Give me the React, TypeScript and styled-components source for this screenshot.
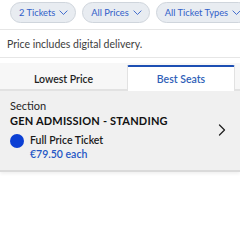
import React from 'react';
import styled, { createGlobalStyle } from 'styled-components';

const GlobalStyle = createGlobalStyle`
  html, body {
    margin: 0;
    padding: 0;
    background: #ffffff;
  }
  body {
    font-family: Lato, "Liberation Sans", sans-serif;
    -webkit-font-smoothing: antialiased;
  }
`;

const filters = ['2 Tickets', 'All Prices', 'All Ticket Types'];

const Chevron = ({ size = 9, color = '#3160c9' }: { size?: number; color?: string }): JSX.Element => (
  <svg width={size} height={size * 0.6} viewBox="0 0 10 6" fill="none">
    <path d="M1 1l4 4 4-4" stroke={color} strokeWidth="1" strokeLinecap="round" strokeLinejoin="round" />
  </svg>
);

const App = (): JSX.Element => {
  return (
    <Page>
      <GlobalStyle />
      <FilterBar>
        {filters.map((label) => (
          <Pill key={label}>
            <span>{label}</span>
            <Chevron />
          </Pill>
        ))}
      </FilterBar>
      <Note>Price includes digital delivery.</Note>
      <Tabs>
        <Tab active={false} width={127}>Lowest Price</Tab>
        <Tab active width={108}>Best Seats</Tab>
      </Tabs>
      <Listing>
        <ListingInfo>
          <Label>Section</Label>
          <SectionName>GEN ADMISSION - STANDING</SectionName>
          <TicketRow>
            <Dot />
            <TicketText>
              <TicketType>Full Price Ticket</TicketType>
              <Price>€79.50 each</Price>
            </TicketText>
          </TicketRow>
        </ListingInfo>
        <svg width="8" height="12" viewBox="0 0 8 12" fill="none">
          <path d="M1.5 1l5 5-5 5" stroke="#222" strokeWidth="1.3" strokeLinecap="round" strokeLinejoin="round" />
        </svg>
      </Listing>
    </Page>
  );
};

const Page = styled.div`
  width: 240px;
  height: 240px;
  overflow: hidden;
  background: #fff;
`;
const FilterBar = styled.div`
  display: flex;
  gap: 6px;
  padding: 2px 0 6px 10px;
  border-bottom: 1px solid #e6e6e6;
  white-space: nowrap;
`;
const Pill = styled.div`
  flex: none;
  display: flex;
  align-items: center;
  gap: 4px;
  height: 21px;
  box-sizing: border-box;
  padding: 0 7px 0 8px;
  border-radius: 11px;
  border: 1px solid #cfd5dc;
  background: #e8ecf1;
  color: #3160c9;
  font-size: 9.3px;
`;
const Note = styled.div`
  padding: 8px 7px 7px;
  font-size: 10.5px;
  color: #3d3d3d;
  border-bottom: 1px solid #e6e6e6;
`;
const Tabs = styled.div`
  display: flex;
  margin-top: 5px;
  background: #f7f7f7;
  border-bottom: 2px solid #e2e2e2;
`;
const Tab = styled.div<{ active: boolean; width: number }>`
  flex: none;
  width: ${({ width }): string => `${width}px`};
  height: 26px;
  display: flex;
  align-items: center;
  justify-content: center;
  margin-top: 2px;
  margin-bottom: -2px;
  box-sizing: border-box;
  font-size: 10.5px;
  font-weight: 600;
  color: ${({ active }): string => (active ? '#2f5fb8' : '#1f1f1f')};
  background: ${({ active }): string => (active ? '#ffffff' : 'transparent')};
  border-top: 2px solid ${({ active }): string => (active ? '#1d4fb3' : 'transparent')};
  border-left: ${({ active }): string => (active ? '1px solid #e2e2e2' : 'none')};
  border-right: ${({ active }): string => (active ? '1px solid #e2e2e2' : 'none')};
  border-radius: ${({ active }): string => (active ? '2px 2px 0 0' : '0')};
`;
const Listing = styled.div`
  display: flex;
  align-items: center;
  justify-content: space-between;
  padding: 7px 14px 8px 10px;
  background: #f0f0f0;
  border-bottom: 2px solid #dadada;
  box-shadow: 0 2px 3px rgba(0, 0, 0, 0.06);
`;
const ListingInfo = styled.div`
  display: flex;
  flex-direction: column;
`;
const Label = styled.div`
  font-size: 11px;
  color: #262626;
  line-height: 15px;
`;
const SectionName = styled.div`
  font-size: 11px;
  font-weight: 700;
  color: #111;
  line-height: 15px;
  letter-spacing: 0.2px;
`;
const TicketRow = styled.div`
  display: flex;
  align-items: flex-start;
  gap: 6px;
  margin-top: 5px;
`;
const Dot = styled.div`
  width: 14px;
  height: 14px;
  border-radius: 50%;
  background: #0b3fd4;
  margin-top: 1px;
`;
const TicketText = styled.div`
  display: flex;
  flex-direction: column;
`;
const TicketType = styled.div`
  font-size: 10.5px;
  font-weight: 600;
  color: #1a1a1a;
  line-height: 14px;
`;
const Price = styled.div`
  font-size: 10.5px;
  font-weight: 600;
  color: #2457c5;
  line-height: 15px;
`;

export default App;
